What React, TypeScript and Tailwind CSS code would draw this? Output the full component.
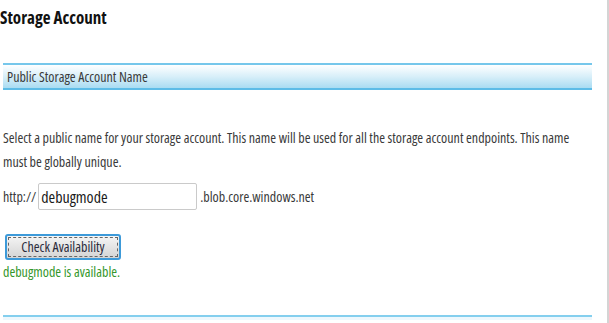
import React, { useState } from 'react';

const App: React.FC = () => {
  const [name, setName] = useState('debugmode');

  return (
    <div className="flex h-[323px] w-[609px] overflow-hidden bg-white font-['Open_Sans',sans-serif] font-stretch-condensed">
      <div className="w-[607px] pl-[3px] pr-[15px]">
        <h1 className="-ml-[3px] pt-[8px] text-[17px] font-bold leading-[20px] text-[#111]">
          Storage Account
        </h1>

        <div className="mt-[35px] h-[27px] border-t-2 border-b-2 border-t-[#76c7eb] border-b-[#5dbce7] bg-gradient-to-b from-white via-[#d8eff9] to-[#a9dcf2] pl-[4px] pt-px text-[14px] leading-[22px] text-[#3a3a3a]">
          Public Storage Account Name
        </div>

        <p className="mt-[36px] text-[14px] leading-[24px] text-[#3a3a3a]">
          Select a public name for your storage account. This name will be used for all the storage account endpoints. This name must be globally unique.
        </p>

        <div className="mt-[9px] flex items-center text-[14px] text-[#3a3a3a]">
          <span className="mr-[2px]">http://</span>
          <input
            value={name}
            onChange={(e) => setName(e.target.value)}
            className="h-[27px] w-[159px] rounded-[2px] border border-[#cacaca] px-[2px] font-['Open_Sans',sans-serif] text-[16px] text-[#1a1a1a] font-stretch-condensed outline-none"
          />
          <span className="ml-[3px]">.blob.core.windows.net</span>
        </div>

        <button
          type="button"
          className="mt-[24px] ml-[2px] block h-[26px] w-[116px] rounded-[3px] border-2 border-[#3d9ad9] bg-gradient-to-b from-[#f5f5f5] to-[#d4d4d4] p-[1px]"
        >
          <span className="flex h-full w-full items-center justify-center border border-dashed border-[#666] text-[14px] leading-none text-[#2b2b3b]">
            Check Availability
          </span>
        </button>

        <div className="mt-[2px] text-[14px] leading-[20px] text-[#35972c]">
          debugmode is available.
        </div>

        <div className="mt-[33px] border-t-2 border-[#84cfee]" />
        <div className="h-[3px] bg-[#eef8fd]" />
      </div>
      <div className="h-full w-[2px] bg-[#d4d4d4]" />
    </div>
  );
};

export default App;
